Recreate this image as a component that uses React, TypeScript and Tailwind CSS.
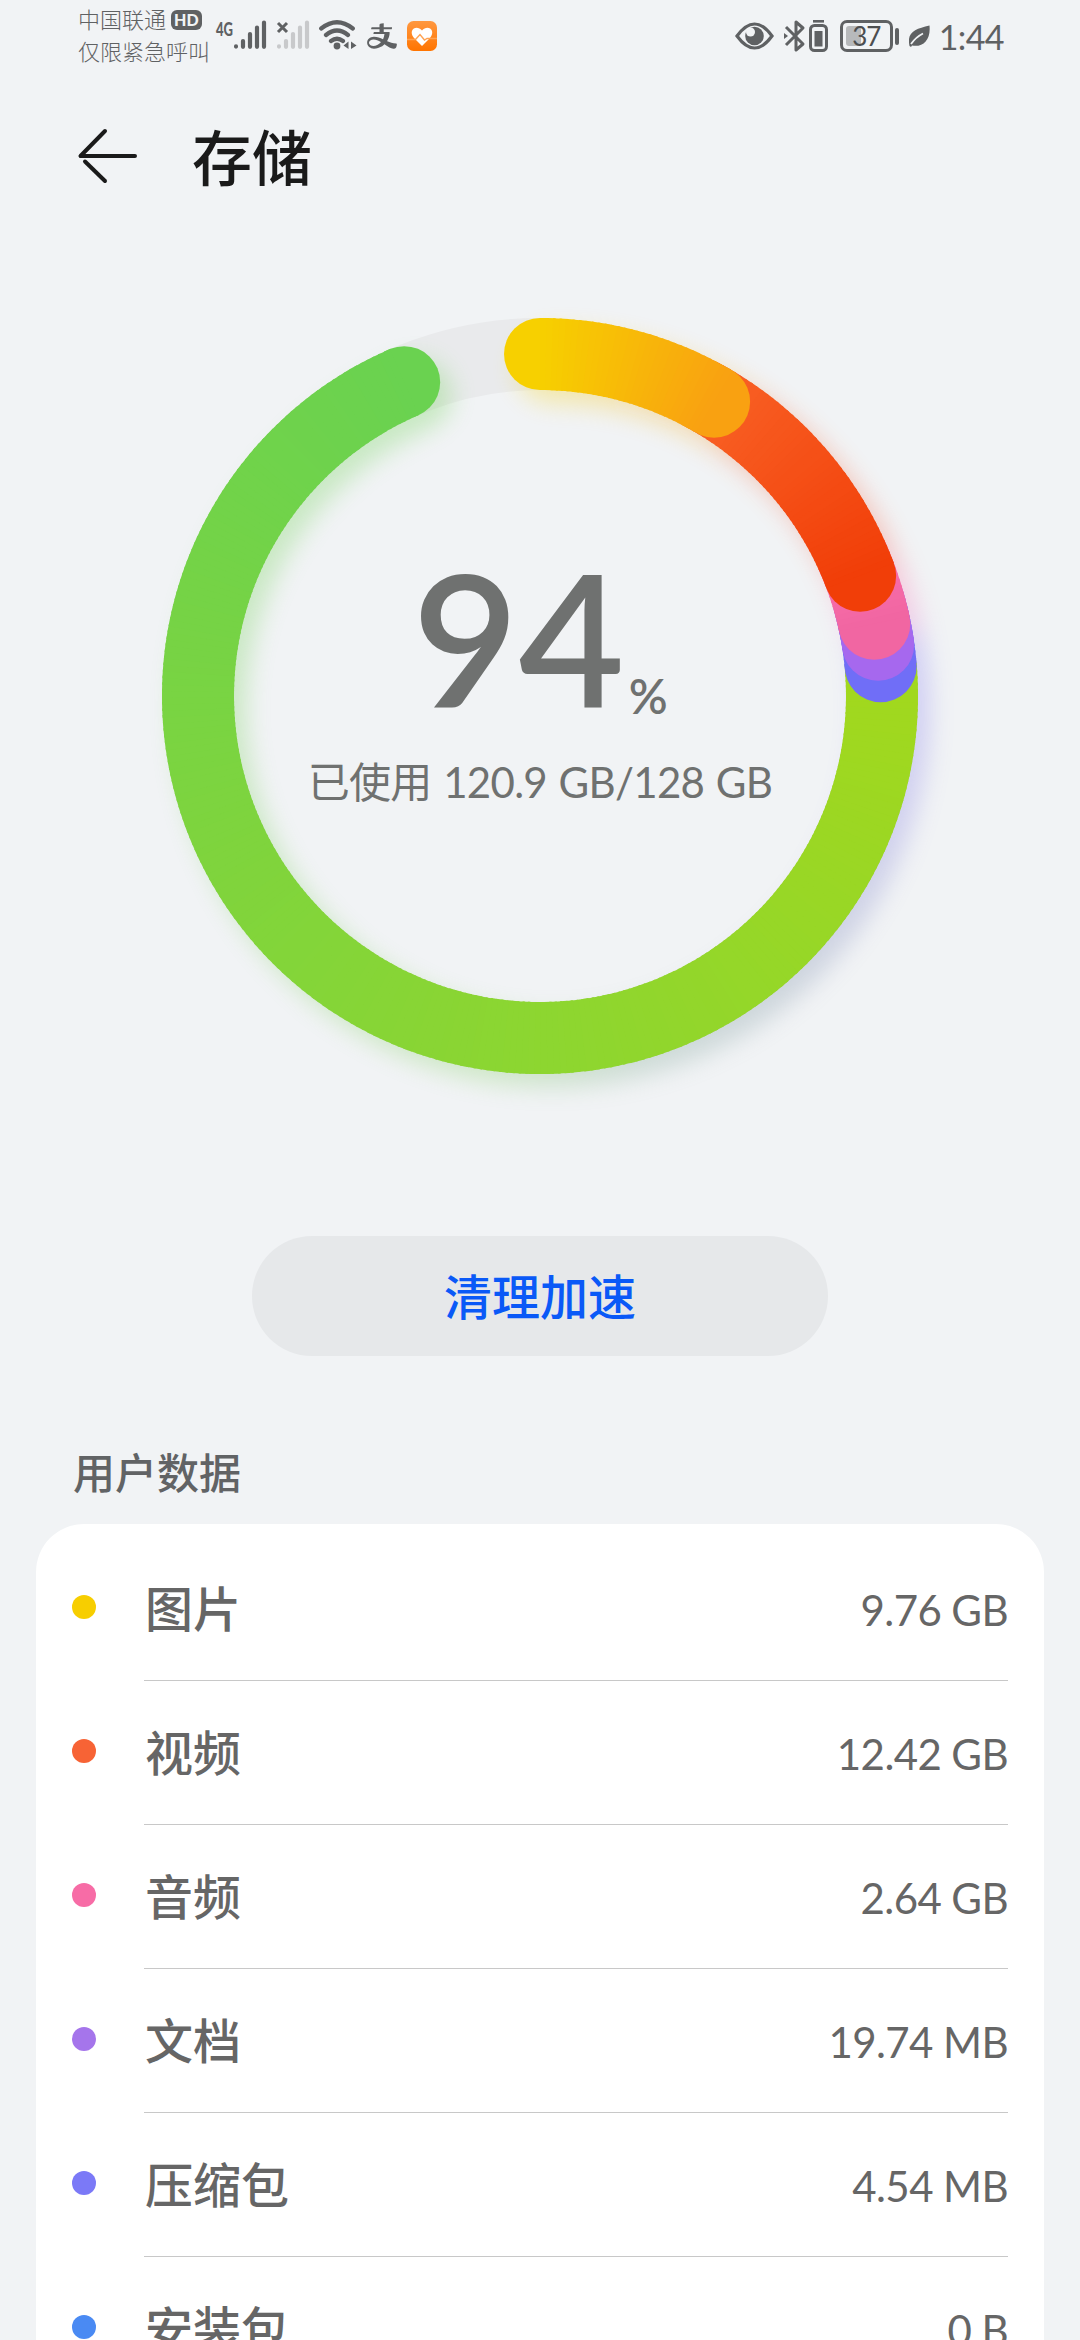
import { AiOutlineAlipay } from "react-icons/ai";

interface Category {
  name: string;
  size: string;
  dot: string;
}

interface Stop {
  at: number;
  color: number[];
}

const categories: Category[] = [
  { name: "图片", size: "9.76 GB", dot: "bg-[#f7ce00]" },
  { name: "视频", size: "12.42 GB", dot: "bg-[#f76335]" },
  { name: "音频", size: "2.64 GB", dot: "bg-[#f76ca6]" },
  { name: "文档", size: "19.74 MB", dot: "bg-[#a575eb]" },
  { name: "压缩包", size: "4.54 MB", dot: "bg-[#7b79f7]" },
  { name: "安装包", size: "0 B", dot: "bg-[#4a8af3]" },
];

// Angles are degrees clockwise from the top. Later entries lie over earlier ones.
const arcs: Stop[][] = [
  [{ at: 85, color: [162, 216, 29] }, { at: 336.6, color: [106, 210, 80] }],
  [{ at: 76, color: [112, 110, 247] }, { at: 85, color: [112, 110, 247] }],
  [{ at: 74, color: [166, 104, 238] }, { at: 81.4, color: [166, 104, 238] }],
  [{ at: 66, color: [250, 111, 172] }, { at: 77.8, color: [241, 102, 162] }],
  [{ at: 28, color: [249, 98, 38] }, { at: 69.4, color: [241, 62, 8] }],
  [{ at: 0, color: [247, 208, 0] }, { at: 30.6, color: [249, 161, 17] }],
];

const shadow: Stop[] = [
  { at: 0, color: [247, 208, 0] },
  { at: 28, color: [249, 161, 17] },
  { at: 36, color: [249, 98, 38] },
  { at: 62, color: [249, 90, 60] },
  { at: 70, color: [255, 110, 170] },
  { at: 76, color: [240, 120, 200] },
  { at: 80, color: [135, 125, 245] },
  { at: 108, color: [135, 130, 225] },
  { at: 140, color: [125, 145, 165] },
  { at: 165, color: [125, 165, 145] },
  { at: 190, color: [125, 205, 90] },
  { at: 336.6, color: [106, 210, 80] },
];

const RADIUS = 342;

function point(deg: number) {
  const rad = (deg * Math.PI) / 180;
  return [540 + RADIUS * Math.sin(rad), 456 - RADIUS * Math.cos(rad)];
}

function mix(stops: Stop[], deg: number) {
  let i = 0;
  while (i < stops.length - 2 && deg > stops[i + 1].at) i++;
  const a = stops[i];
  const b = stops[i + 1];
  const t = Math.min(1, Math.max(0, (deg - a.at) / (b.at - a.at)));
  return `rgb(${a.color.map((c, k) => Math.round(c + (b.color[k] - c) * t)).join(",")})`;
}

function Arc({ stops }: { stops: Stop[] }) {
  const start = stops[0].at;
  const end = stops[stops.length - 1].at;
  const count = Math.ceil(end - start);
  const step = (end - start) / count;
  const [sx, sy] = point(start);
  const [ex, ey] = point(end);
  return (
    <g>
      <circle cx={sx} cy={sy} r="36" fill={mix(stops, start)} />
      <circle cx={ex} cy={ey} r="36" fill={mix(stops, end)} />
      {Array.from({ length: count }, (_, i) => {
        const from = start + i * step;
        const [x1, y1] = point(from);
        const [x2, y2] = point(Math.min(end, from + step + 0.4));
        return (
          <path
            key={i}
            d={`M${x1} ${y1}A${RADIUS} ${RADIUS} 0 0 1 ${x2} ${y2}`}
            stroke={mix(stops, from + step / 2)}
            strokeWidth="72"
            fill="none"
          />
        );
      })}
    </g>
  );
}

function Ring() {
  return (
    <svg className="block" width="1080" height="936" viewBox="0 0 1080 936">
      <defs>
        <filter id="soft" x="-10%" y="-10%" width="120%" height="120%">
          <feGaussianBlur stdDeviation="12" />
        </filter>
      </defs>
      <circle cx="540" cy="456" r={RADIUS} stroke="#e9eaec" strokeWidth="72" fill="none" />
      <g filter="url(#soft)" opacity="0.3" transform="translate(12 13)">
        <Arc stops={shadow} />
      </g>
      {arcs.map((stops, i) => (
        <Arc key={i} stops={stops} />
      ))}
    </svg>
  );
}

function Signal({ color }: { color: string }) {
  return (
    <g stroke={color} strokeWidth="4.2" strokeLinecap="round">
      <path d="M3 28.4V28.6M10 23v5.8M17 16v12.8M24 9.5v19.3M31 4.5v24.3" />
    </g>
  );
}

function StatusBar() {
  return (
    <div className="flex h-[72px] shrink-0 items-center pl-[78px] pr-[76px] text-[#5f6163]">
      <div className="flex w-[132px] flex-col whitespace-nowrap text-[22px] leading-8 font-light">
        <div className="flex items-center gap-[5px]">
          <span>中国联通</span>
          <span className="rounded-[6px] bg-[#5f6163] px-[3px] text-[16px] leading-[20px] font-black text-[#f1f3f5]">HD</span>
        </div>
        <span>仅限紧急呼叫</span>
      </div>
      <svg className="ml-[5px]" width="52" height="34" viewBox="-18 1 52 34">
        <text x="-17" y="17.5" fontSize="19" fontWeight="900" textLength="17" lengthAdjust="spacingAndGlyphs" fill="#5f6163">4G</text>
        <Signal color="#5f6163" />
      </svg>
      <svg className="ml-[9px]" width="34" height="34" viewBox="0 1 34 34">
        <Signal color="#c8c9cb" />
        <path d="M2 5l9 9M11 5l-9 9" stroke="#5f6163" strokeWidth="3" />
      </svg>
      <svg className="ml-[9px]" width="38" height="34" viewBox="0 1 38 34" fill="none" stroke="#5f6163" strokeLinecap="round">
        <path d="M2.200 10.500Q18 -2 33.800 10.500M7 17Q18 8 29 17M12 23Q18 18.500 24 23" strokeWidth="4.200" />
        <circle cx="18" cy="28" r="3.400" fill="#5f6163" stroke="none" />
        <path d="M29.500 23.500v7.500l-5 -3.600zM32 23.500v7.500l5.500 -3.600z" fill="#5f6163" stroke="none" />
      </svg>
      <AiOutlineAlipay className="ml-[8px] h-[34px] w-[34px]" />
      <svg className="ml-[8px]" width="30" height="30" viewBox="0 0 30 30">
        <defs>
          <linearGradient id="health" x2="0" y2="1">
            <stop stopColor="#ff9840" />
            <stop offset="1" stopColor="#ff7400" />
          </linearGradient>
        </defs>
        <rect width="30" height="30" rx="6.5" fill="url(#health)" />
        <path d="M15 25L7 17C0.500 9 9.500 3 15 9.500C20.500 3 29.500 9 23 17Z" fill="#fff" />
        <path d="M0 18.500H8.500L13 13.500L17.500 19L20 17.500H30" fill="none" stroke="#ffa353" strokeWidth="1.400" />
      </svg>
      <div className="ml-auto flex items-center">
        <svg width="39" height="28" viewBox="0 0 39 28">
          <path d="M2 14Q19.500 -10 37 14Q19.500 38 2 14Z" fill="none" stroke="#5f6163" strokeWidth="3.200" />
          <circle cx="19.500" cy="14" r="9.300" fill="#5f6163" />
          <circle cx="15.500" cy="10" r="4.500" fill="#f1f3f5" />
        </svg>
        <svg className="ml-[10px]" width="22" height="34" viewBox="0 0 22 34" fill="none" stroke="#5f6163" strokeWidth="3">
          <path d="M2 8L19 25L12 31V3L19 9L2 26" strokeLinejoin="round" />
          <path d="M0 14l4 3l-4 3z" fill="#5f6163" stroke="none" />
        </svg>
        <svg className="ml-[3px]" width="19" height="34" viewBox="0 0 19 34">
          <path d="M4 2.300H15" stroke="#5f6163" strokeWidth="2.600" />
          <rect x="1.500" y="6.500" width="16" height="25" rx="4" fill="none" stroke="#5f6163" strokeWidth="3" />
          <rect x="5.500" y="12" width="8" height="15.500" fill="#5f6163" />
        </svg>
        <div className="relative ml-[12px] flex h-[32px] w-[53px] items-center justify-center rounded-[7px] border-3 border-[#5f6163]">
          <span className="absolute top-[3px] left-[3px] h-[20px] w-[15px] rounded-[3px] bg-[#b7b9bb]" />
          <span className="relative text-[26px] leading-none tracking-[-1px] text-[#4c4e50]">37</span>
        </div>
        <span className="ml-[2px] h-[17px] w-[4px] rounded-full bg-[#5f6163]" />
        <svg className="ml-[10px]" width="21" height="22" viewBox="0 0 21 22">
          <path d="M20.500 0.500C22 15 14 22.500 3 20.500L2 22L0.500 21C-2.500 7 6 4 20.500 0.500Z" fill="#5f6163" />
          <path d="M2 19Q7 12 14 8.500" stroke="#f1f3f5" strokeWidth="1.800" fill="none" />
        </svg>
        <span className="ml-[9px] pt-[2px] text-[34px] leading-none tracking-[-0.6px]">1:44</span>
      </div>
    </div>
  );
}

export default function App() {
  return (
    <div className="flex h-[2340px] w-[1080px] flex-col overflow-hidden bg-[#f1f3f5] font-[Lato,'Noto_Sans_CJK_SC',sans-serif]">
      <StatusBar />

      <header className="flex h-[168px] shrink-0 items-center pl-[77px]">
        <svg width="62" height="56" viewBox="0 0 62 56" fill="none" stroke="#1a1a1a" strokeWidth="4" strokeLinecap="round">
          <path d="M28 3L3.500 28H58" strokeLinejoin="round" />
          <path d="M8 33.500L28 53" />
        </svg>
        <h1 className="ml-[53px] pt-1 text-[60px] leading-none font-medium text-[#1a1a1a]">存储</h1>
      </header>

      <section className="relative h-[996px] shrink-0">
        <Ring />
        <div className="absolute inset-x-0 top-[318px] flex flex-col items-center text-[#6f7170]">
          <div className="flex items-baseline">
            <span className="text-[183px] leading-[156px] font-semibold">94</span>
            <span className="relative top-[7px] ml-[4px] text-[48px] leading-none font-semibold">%</span>
          </div>
          <p className="mt-[38px] text-[42px] leading-[60px] tracking-[-0.7px] whitespace-nowrap [word-spacing:1.5px]">已使用 120.9 GB/128 GB</p>
        </div>
      </section>

      <button className="mx-auto h-[120px] w-[576px] shrink-0 rounded-full bg-[#e6e8ea] pt-px text-[48px] font-medium text-[#0a59f7]">
        清理加速
      </button>

      <h2 className="mt-[87px] ml-[73px] h-[81px] shrink-0 text-[42px] leading-[60px] font-medium text-[#616365]">用户数据</h2>

      <ul className="mx-9 h-[900px] shrink-0 rounded-t-[48px] bg-white pt-[13px] pl-9">
        {categories.map((item) => (
          <li key={item.name} className="flex h-[144px] items-center">
            <span className={`mb-[5px] h-6 w-6 rounded-full ${item.dot}`} />
            <div className="mr-9 ml-12 flex h-full flex-1 items-center justify-between border-b border-[#c8c8c8] text-[#666]">
              <span className="pt-px pl-px text-[48px] font-medium">{item.name}</span>
              <span className="pt-1 text-[42px] tracking-[-0.6px]">{item.size}</span>
            </div>
          </li>
        ))}
      </ul>
    </div>
  );
}
